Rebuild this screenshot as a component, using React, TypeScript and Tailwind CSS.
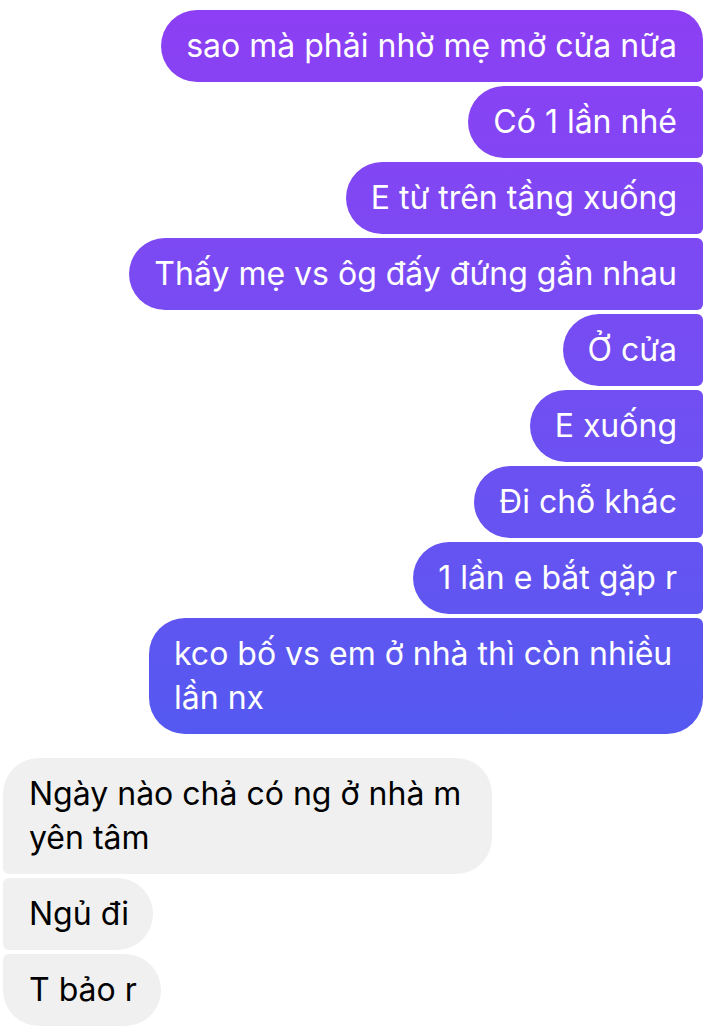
import React from "react";

type Msg = { text: string; shape: string; width?: string };

const sent: Msg[] = [
  { text: "sao mà phải nhờ mẹ mở cửa nữa", shape: "rounded-l-[36px] rounded-tr-[30px] rounded-br-[6px]" },
  { text: "Có 1 lần nhé", shape: "rounded-l-[36px] rounded-r-[6px]" },
  { text: "E từ trên tầng xuống", shape: "rounded-l-[36px] rounded-r-[6px]" },
  { text: "Thấy mẹ vs ôg đấy đứng gần nhau", shape: "rounded-l-[36px] rounded-r-[6px]" },
  { text: "Ở cửa", shape: "rounded-l-[36px] rounded-r-[6px]" },
  { text: "E xuống", shape: "rounded-l-[36px] rounded-r-[6px]" },
  { text: "Đi chỗ khác", shape: "rounded-l-[36px] rounded-r-[6px]" },
  { text: "1 lần e bắt gặp r", shape: "rounded-l-[36px] rounded-r-[6px]" },
  { text: "kco bố vs em ở nhà thì còn nhiều\nlần nx", shape: "rounded-l-[36px] rounded-tr-[6px] rounded-br-[36px]", width: "w-[554px]" },
];

const received: Msg[] = [
  { text: "Ngày nào chả có ng ở nhà m\nyên tâm", shape: "rounded-r-[36px] rounded-tl-[36px] rounded-bl-[6px]", width: "w-[489px]" },
  { text: "Ngủ đi", shape: "rounded-r-[36px] rounded-l-[6px]" },
  { text: "T bảo r", shape: "rounded-r-[36px] rounded-tl-[6px] rounded-bl-[36px]" },
];

export default function App() {
  return (
    <div className="min-h-[1036px] w-[719px] bg-white pt-[10px] font-['Inter','Noto_Sans',sans-serif] text-[32px] leading-[44px]">
      <div className="flex flex-col items-end gap-[4px] pr-[16px]">
        {sent.map((m, i) => (
          <div
            key={i}
            className={`whitespace-pre-line py-[14px] pl-[25px] pr-[26px] text-white bg-fixed bg-linear-to-b from-[#8d3ef4] from-0% to-[#5459f1] to-71% ${m.shape} ${m.width ?? "w-fit"}`}
          >
            {m.text}
          </div>
        ))}
      </div>
      <div className="mt-[24px] flex flex-col items-start gap-[4px] pl-[3px]">
        {received.map((m, i) => (
          <div
            key={i}
            className={`whitespace-pre-line bg-[#f0f0f0] py-[14px] pl-[26px] pr-[24px] text-black ${m.shape} ${m.width ?? "w-fit"}`}
          >
            {m.text}
          </div>
        ))}
      </div>
    </div>
  );
}
